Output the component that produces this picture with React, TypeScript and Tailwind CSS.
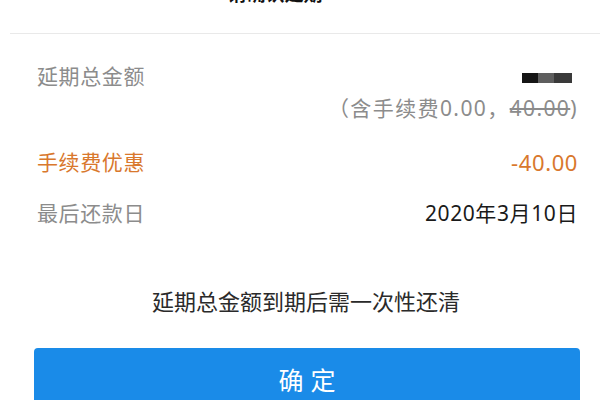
export default function App() {
  return (
    <div className="w-[600px] h-[400px] overflow-hidden bg-white font-['Noto_Sans','Noto_Sans_CJK_SC',sans-serif]">
      {/* header, scrolled so only the bottom of the title shows */}
      <div className="ml-[10px] h-[34px] overflow-hidden border-b border-[#e9e9e9] flex">
        <div className="flex-1" />
        <div className="-mt-[17px] mr-[34px] text-[19px] leading-[22px] font-bold text-[#111]">请确认延期</div>
        <div className="flex-1 flex justify-end pr-[26px]">
          <span className="-mt-[19px] text-[26px] leading-[24px] text-[#bbb]">×</span>
        </div>
      </div>

      <div className="pl-[37px] pr-[22px] tracking-[0.6px]">
        <div className="mt-[26px] flex justify-between">
          <span className="text-[21px] leading-[32px] text-[#8c8c8c]">延期总金额</span>
          <div className="flex flex-col items-end">
            <div className="h-[32px] flex items-center pr-[6px]">
              <div className="flex h-[10px] mt-[4px]">
                <div className="w-[16px] bg-[#151515]" />
                <div className="w-[16px] bg-[#5e5e5e]" />
                <div className="w-[18px] bg-[#3a3a3a]" />
              </div>
            </div>
            <span className="text-[21px] leading-[32px] tracking-[1.4px] text-[#8c8c8c]">
              （含手续费0.00，<span className="line-through">40.00</span>)
            </span>
          </div>
        </div>

        <div className="mt-[23px] flex justify-between text-[21px] leading-[30px] text-[#d9782d]">
          <span>手续费优惠</span>
          <span className="text-[22px]">-40.00</span>
        </div>

        <div className="mt-[21px] flex justify-between text-[21px] leading-[30px]">
          <span className="text-[#8c8c8c]">最后还款日</span>
          <span className="text-[#1a1a1a]">2020年3月10日</span>
        </div>
      </div>

      <div className="mt-[58px] pl-[12px] text-center text-[22px] leading-[30px] text-[#2a2a2a]">
        延期总金额到期后需一次性还清
      </div>

      <button className="mt-[32px] ml-[34px] w-[546px] h-[64px] rounded-[4px] bg-[#1a8be8] text-white text-[25px] tracking-[7px] pl-[7px] leading-[64px]">
        确定
      </button>
    </div>
  );
}
